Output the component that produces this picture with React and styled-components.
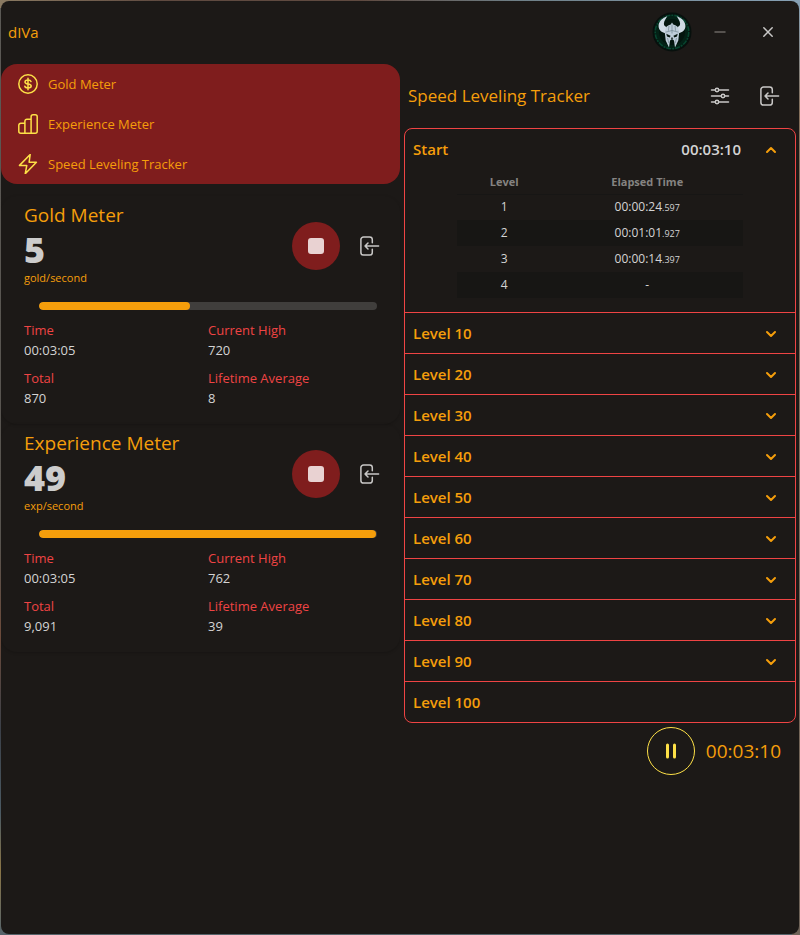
import React, { useState } from "react";
import styled, { createGlobalStyle } from "styled-components";

const color = {
  base: "#1c1917",
  amber: "#f59e0b",
  yellow: "#fde047",
  red: "#ef4444",
  maroon: "#7f1d1d",
  text: "#d4d4d4",
};

const GlobalStyle = createGlobalStyle`
  * { box-sizing: border-box; }
  body {
    margin: 0;
    font-family: "Open Sans", "Noto Sans", sans-serif;
    font-size: 13px;
    line-height: 20px;
    color: ${color.text};
    background:
      linear-gradient(90deg, #8a7a62 0%, #5f4a40 20%, #5f4a40 45%, #6f8088 65%, #86a0b4 100%) top / 100% 8px no-repeat,
      linear-gradient(180deg, #86a0b4 0%, #85705c 12%, #6f6358 100%) right / 8px 100% no-repeat,
      linear-gradient(180deg, #5b5955 0%, #57534e 58%, #6b4a3a 68%, #3b4048 78%, #4b5a63 87%, #8a7546 93%, #55636b 100%);
  }
  button {
    font: inherit;
    color: inherit;
    background: none;
    border: 0;
    padding: 0;
    cursor: pointer;
  }
`;

const Desktop = styled.div`
  display: flex;
  min-height: 100vh;
  padding: 1px;
`;

const Window = styled.div`
  flex: 1;
  min-width: 0;
  background: ${color.base};
  border-radius: 8px;
  overflow: hidden;
`;

const TitleBar = styled.header`
  display: flex;
  align-items: center;
  height: 63px;
  padding: 0 7px 2px;
`;

const AppName = styled.h1`
  flex: 1;
  margin: 0;
  font-size: 15px;
  font-weight: 400;
  color: ${color.amber};
`;

const Avatar = styled.svg`
  margin-right: 4px;
`;

const IconButton = styled.button`
  display: grid;
  place-items: center;
  width: ${(p) => p.$size}px;
  height: ${(p) => p.$size}px;
  color: ${(p) => (p.$dim ? "#696663" : "#c9c8c7")};
`;

const Columns = styled.main`
  display: grid;
  grid-template-columns: 1fr 1fr;
  align-items: start;
`;

const Nav = styled.nav`
  display: grid;
  margin-bottom: 12px;
  background: ${color.maroon};
  border-radius: 16px;
`;

const NavLink = styled.a`
  display: flex;
  align-items: center;
  gap: 10px;
  height: 40px;
  padding: 0 17px;
  color: ${color.amber};
  text-decoration: none;

  svg { color: ${color.yellow}; }
`;

const Card = styled.section`
  padding: 5px 0 16px;
  border-radius: 16px;
  box-shadow: 0 1px 3px rgba(0, 0, 0, 0.2);
`;

const CardHead = styled.div`
  display: flex;
  align-items: center;
  gap: 20px;
  padding: 0 20px 0 23px;
`;

const Reading = styled.div`
  flex: 1;
  padding-bottom: 6px;
  color: ${color.amber};
`;

const Heading = styled.h2`
  margin: 0;
  font-size: ${(p) => (p.$large ? 19 : 17)}px;
  font-weight: 400;
  line-height: 28px;
  color: ${color.amber};
`;

const BigNumber = styled.div`
  font-size: 36px;
  font-weight: 800;
  line-height: 42px;
  color: #cccccc;
`;

const Unit = styled.div`
  font-size: 11px;
  line-height: 14px;
`;

const StopButton = styled.button`
  display: grid;
  place-items: center;
  width: 48px;
  height: 48px;
  border-radius: 50%;
  background: ${color.maroon};

  &::before {
    content: "";
    width: 16px;
    height: 16px;
    border-radius: 3px;
    background: #e9d2d2;
  }
`;

const Track = styled.div`
  height: 8px;
  margin: 11px 23px 10px 38px;
  border-radius: 4px;
  background: #403e3c;
  overflow: hidden;
`;

const Fill = styled.div`
  height: 100%;
  border-radius: 4px;
  background: ${color.amber};
`;

const Stats = styled.dl`
  display: grid;
  grid-template-columns: 1fr 1fr;
  gap: 8px 15px;
  margin: 0;
  padding: 0 23px;

  dt { color: ${color.red}; }
  dd { margin: 0; }
`;

const Tracker = styled.section`
  padding: 0 3px 0 4px;
`;

const TrackerHead = styled.div`
  display: flex;
  align-items: center;
  gap: 10px;
  height: 64px;
  padding: 0 6px 0 4px;

  h2 { flex: 1; }
`;

const Accordion = styled.div`
  border: 1px solid ${color.red};
  border-radius: 8px;
`;

const Section = styled.div`
  & + & { border-top: 1px solid ${color.red}; }
`;

const SectionHead = styled.button`
  display: flex;
  align-items: center;
  gap: 24px;
  width: 100%;
  height: 40px;
  padding: 0 18px 0 8px;
  font-size: 15px;
  font-weight: 600;
  text-align: left;
  color: ${color.amber};

  &:disabled { cursor: default; }
`;

const SectionName = styled.span`
  flex: 1;
`;

const SectionTime = styled.span`
  color: ${color.text};
`;

const Panel = styled.div`
  padding: 0 52px 14px;
`;

const Splits = styled.table`
  width: 100%;
  table-layout: fixed;
  border-collapse: collapse;
  font-size: 12px;
  line-height: 16px;
  text-align: center;

  th {
    height: 25px;
    padding: 1px 0 0;
    font-size: 11px;
    font-weight: 700;
    color: #858381;
    border-bottom: 1px solid #171615;
  }
  th:first-child { width: 33%; }
  td { height: 26px; padding: 0; }
  tbody tr:nth-child(even) { background: #171614; }
`;

const Millis = styled.span`
  font-size: 9px;
`;

const Footer = styled.footer`
  display: flex;
  align-items: center;
  justify-content: flex-end;
  gap: 11px;
  padding: 4px 15px;
`;

const PauseButton = styled.button`
  display: grid;
  place-items: center;
  width: 48px;
  height: 48px;
  border: 1px solid ${color.yellow};
  border-radius: 50%;
  color: ${color.yellow};
`;

const Total = styled.output`
  font-size: 19px;
  line-height: 28px;
  color: ${color.amber};
`;

function Icon({ size = 20, stroke = 1.5, children }) {
  return (
    <svg
      width={size}
      height={size}
      viewBox={`0 0 ${size} ${size}`}
      fill="none"
      stroke="currentColor"
      strokeWidth={stroke}
      strokeLinecap="round"
      strokeLinejoin="round"
      aria-hidden="true"
    >
      {children}
    </svg>
  );
}

const DollarIcon = () => (
  <Icon>
    <circle cx="10" cy="10" r="9.2" />
    <path d="M10 4.200v11.600M13 7.600C12.600 6.500 11.500 6 10 6 8.300 6 7 6.700 7 8c0 1.400 1.300 1.800 3 2s3.200.700 3.200 2.100C13.200 13.400 11.800 14 10 14c-1.700 0-2.900-.600-3.200-1.700" />
  </Icon>
);

const BarsIcon = () => (
  <Icon>
    <path d="M.8 11.300a2 2 0 0 1 2-2H6.900v9.900H2.800a2 2 0 0 1-2-2zM6.900 7.200a2 2 0 0 1 2-2h4.200v14H6.900zM13.100 2.800a2 2 0 0 1 2-2h2.100a2 2 0 0 1 2 2v14.400a2 2 0 0 1-2 2h-4.100z" />
  </Icon>
);

const BoltIcon = () => (
  <Icon>
    <path d="M12.200.5L1.500 11.400h7.300L7.200 19.800 18.400 8.300h-7.300z" />
  </Icon>
);

const ExitIcon = () => (
  <Icon>
    <path d="M12.300 6.800V3.600a2.700 2.700 0 0 0-2.700-2.700H3.600A2.700 2.700 0 0 0 .900 3.600v12.800a2.700 2.700 0 0 0 2.700 2.700h6a2.700 2.700 0 0 0 2.700-2.700v-3.200M18.600 10H5M8 7l-3 3 3 3" />
  </Icon>
);

const SlidersIcon = () => (
  <Icon>
    <path d="M1.500 4h3.800M8.700 4h9.800M1.500 10h9.800M14.700 10h3.800M1.500 16h3.800M8.700 16h9.800" />
    <circle cx="7" cy="4" r="1.700" />
    <circle cx="13" cy="10" r="1.700" />
    <circle cx="7" cy="16" r="1.700" />
  </Icon>
);

const MinusIcon = () => (
  <Icon size={12}>
    <path d="M1 6h10" />
  </Icon>
);

const CloseIcon = () => (
  <Icon size={12}>
    <path d="M1.800 1.800l8.400 8.400M10.200 1.800l-8.400 8.400" />
  </Icon>
);

const Chevron = ({ up }) => (
  <Icon size={12} stroke={2}>
    <path d={up ? "M2 9l4-4 4 4" : "M2 5l4 4 4-4"} />
  </Icon>
);

const PauseIcon = () => (
  <Icon size={16} stroke={3}>
    <path d="M4.500 2v12M11.500 2v12" />
  </Icon>
);

const HelmetLogo = () => (
  <Avatar width="40" height="40" viewBox="0 0 40 40" aria-hidden="true">
    <circle cx="20" cy="20" r="19.5" fill="#07100d" />
    <circle cx="20" cy="20" r="16.8" fill="#032116" stroke="#07452f" strokeWidth="1.6" strokeDasharray="5 1 2 1" />
    <circle cx="20" cy="20" r="13" fill="#03150e" />
    <path
      fill="#cfdae4"
      d="M15.300 4.300C10 6 6.300 10 6.600 14.500c.2 3.600 3.200 6 6.600 6.700l1.600-6.200c-2-.4-3-1.600-2.900-3.500.2-2.600 2-5 3.400-7.200zM24.700 4.300c5.300 1.700 9 5.700 8.700 10.200-.2 3.600-3.200 6-6.600 6.700l-1.600-6.200c2-.4 3-1.600 2.900-3.500-.2-2.600-2-5-3.400-7.200z"
    />
    <path
      fill="#bfcdd9"
      d="M20 10.600l1.300 2c3 .5 5 2.500 5.500 5.400l.3 3.500-.8 7-3.300 7.100-1-7.100-2-1.500-2 1.500-1 7.100-3.300-7.100-.8-7 .3-3.500c.5-2.900 2.500-4.900 5.500-5.400z"
    />
    <path fill="#0a1813" d="M14.300 21.700l4.200 2-.6 1.900-2.900-1.100zM25.700 21.700l-4.200 2 .6 1.900 2.900-1.100zM19.400 25.500h1.200l.6 1.300h-2.400z" />
    <path fill="none" stroke="#71858f" strokeWidth=".7" d="M20 12.500v9M13.500 20.200l6.500-1.700 6.500 1.700M17 13.800l-.6 5M23 13.800l.6 5M15.500 26l1.300 5M24.500 26l-1.300 5" />
  </Avatar>
);

const meters = [
  { title: "Gold Meter", value: "5", unit: "gold/second", progress: 44.6, time: "00:03:05", high: "720", total: "870", average: "8" },
  { title: "Experience Meter", value: "49", unit: "exp/second", progress: 99.8, time: "00:03:05", high: "762", total: "9,091", average: "39" },
];

const splits = [
  { level: 1, time: "00:00:24", ms: ".597" },
  { level: 2, time: "00:01:01", ms: ".927" },
  { level: 3, time: "00:00:14", ms: ".397" },
  { level: 4, time: "-", ms: "" },
];

const sections = ["Start", ...[10, 20, 30, 40, 50, 60, 70, 80, 90, 100].map((n) => `Level ${n}`)];

function Stat({ label, value }) {
  return (
    <div>
      <dt>{label}</dt>
      <dd>{value}</dd>
    </div>
  );
}

function Meter({ meter }) {
  return (
    <Card>
      <CardHead>
        <Reading>
          <Heading $large>{meter.title}</Heading>
          <BigNumber>{meter.value}</BigNumber>
          <Unit>{meter.unit}</Unit>
        </Reading>
        <StopButton aria-label={`Stop ${meter.title}`} />
        <IconButton $size={20} aria-label={`Detach ${meter.title}`}>
          <ExitIcon />
        </IconButton>
      </CardHead>
      <Track role="progressbar" aria-label={meter.title} aria-valuenow={meter.progress}>
        <Fill style={{ width: `${meter.progress}%` }} />
      </Track>
      <Stats>
        <Stat label="Time" value={meter.time} />
        <Stat label="Current High" value={meter.high} />
        <Stat label="Total" value={meter.total} />
        <Stat label="Lifetime Average" value={meter.average} />
      </Stats>
    </Card>
  );
}

function SplitTable() {
  return (
    <Splits>
      <thead>
        <tr>
          <th scope="col">Level</th>
          <th scope="col">Elapsed Time</th>
        </tr>
      </thead>
      <tbody>
        {splits.map((s) => (
          <tr key={s.level}>
            <td>{s.level}</td>
            <td>
              {s.time}
              <Millis>{s.ms}</Millis>
            </td>
          </tr>
        ))}
      </tbody>
    </Splits>
  );
}

export default function App() {
  const [open, setOpen] = useState("Start");

  return (
    <Desktop>
      <GlobalStyle />
      <Window>
        <TitleBar>
          <AppName>dIVa</AppName>
          <HelmetLogo />
          <IconButton $size={48} $dim aria-label="Minimize">
            <MinusIcon />
          </IconButton>
          <IconButton $size={48} aria-label="Close">
            <CloseIcon />
          </IconButton>
        </TitleBar>
        <Columns>
          <div>
            <Nav>
              <NavLink href="#gold"><DollarIcon />Gold Meter</NavLink>
              <NavLink href="#experience"><BarsIcon />Experience Meter</NavLink>
              <NavLink href="#tracker"><BoltIcon />Speed Leveling Tracker</NavLink>
            </Nav>
            {meters.map((m) => (
              <Meter key={m.title} meter={m} />
            ))}
          </div>
          <Tracker>
            <TrackerHead>
              <Heading>Speed Leveling Tracker</Heading>
              <IconButton $size={40} aria-label="Settings"><SlidersIcon /></IconButton>
              <IconButton $size={40} aria-label="Detach tracker"><ExitIcon /></IconButton>
            </TrackerHead>
            <Accordion>
              {sections.map((name) => {
                const last = name === "Level 100";
                const isOpen = open === name;
                return (
                  <Section key={name}>
                    <SectionHead
                      disabled={last}
                      aria-expanded={last ? undefined : isOpen}
                      onClick={() => setOpen(isOpen ? null : name)}
                    >
                      <SectionName>{name}</SectionName>
                      {name === "Start" && <SectionTime>00:03:10</SectionTime>}
                      {!last && <Chevron up={isOpen} />}
                    </SectionHead>
                    {isOpen && <Panel>{name === "Start" && <SplitTable />}</Panel>}
                  </Section>
                );
              })}
            </Accordion>
            <Footer>
              <PauseButton aria-label="Pause"><PauseIcon /></PauseButton>
              <Total>00:03:10</Total>
            </Footer>
          </Tracker>
        </Columns>
      </Window>
    </Desktop>
  );
}
